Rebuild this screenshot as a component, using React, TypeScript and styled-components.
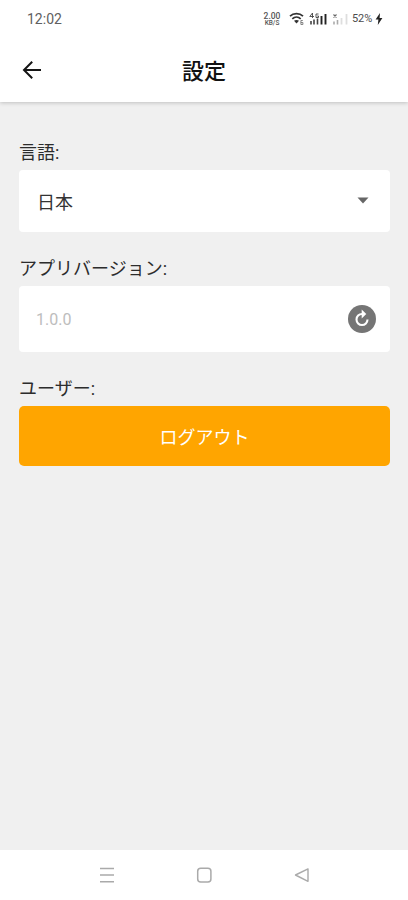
import React from 'react';
import styled, { createGlobalStyle } from 'styled-components';

const GlobalStyle = createGlobalStyle`
  * { box-sizing: border-box; }
  body { margin: 0; background: #f0f0f0; font-family: Roboto, "Noto Sans CJK JP", sans-serif; }
  svg { display: block; }
`;

const Screen = styled.div`
  display: flex;
  flex-direction: column;
  width: 408px;
  height: 900px;
  overflow: hidden;
  background: #f0f0f0;
`;

const Header = styled.header`
  flex: none;
  height: 102px;
  background: #fff;
  box-shadow: 0 1px 4px rgba(0, 0, 0, 0.2);
`;

const StatusBar = styled.div`
  display: flex;
  justify-content: space-between;
  align-items: center;
  height: 38px;
  padding: 0 25px 0 27px;
`;

const Clock = styled.span`
  font-size: 14px;
  line-height: 16px;
  color: #606060;
`;

const StatusIcons = styled.div`
  display: flex;
  align-items: center;
  height: 16px;
`;

const Spacer = styled.span<{ $width: number }>`
  flex: none;
  width: ${(p) => p.$width}px;
`;

const NetSpeed = styled.div`
  display: flex;
  flex-direction: column;
  align-items: center;
  width: 20px;
  margin-right: 7px;
  color: #555;
  font-size: 8.5px;
  line-height: 8px;
  font-weight: 500;
`;

const SpeedValue = styled.span`
  height: 8px;
  line-height: 8px;
`;

const SpeedUnit = styled.span`
  height: 7px;
  font-size: 6.5px;
  line-height: 7px;
`;

const Battery = styled.span`
  width: 22px;
  margin-left: 3px;
  font-size: 11px;
  line-height: 14px;
  letter-spacing: -0.1px;
  color: #4c4c4c;
`;

const TitleBar = styled.div`
  display: grid;
  grid-template-columns: 64px 1fr 64px;
  align-items: center;
  height: 64px;
`;

const BackButton = styled.button`
  display: flex;
  width: 24px;
  height: 24px;
  margin-left: 20px;
  padding: 0;
  border: 0;
  background: none;
`;

const Title = styled.h1`
  margin: 0;
  padding-top: 3px;
  text-align: center;
  font-size: 22px;
  line-height: 32px;
  font-weight: 500;
  color: #111;
`;

const Content = styled.main`
  flex: 1;
  padding: 36px 18px 0 19px;
`;

const Section = styled.section<{ $gap: number }>`
  margin-bottom: ${(p) => p.$gap}px;
`;

const Label = styled.div`
  height: 32px;
  font-size: 18px;
  line-height: 30px;
  color: #2c2c2c;
`;

const Field = styled.div<{ $height: number; $muted?: boolean }>`
  display: flex;
  justify-content: space-between;
  align-items: center;
  height: ${(p) => p.$height}px;
  padding: ${(p) => (p.$muted ? '0 14px 0 17px' : '0 15px 0 18px')};
  border-radius: 4px;
  background: #fff;
  font-size: ${(p) => (p.$muted ? 16 : 18)}px;
  color: ${(p) => (p.$muted ? '#bdbdbd' : '#333')};
`;

const RefreshButton = styled.button`
  display: flex;
  width: 28px;
  height: 28px;
  padding: 0;
  border: 0;
  border-radius: 50%;
  background: #757575;
  align-items: center;
  justify-content: center;
`;

const LogoutButton = styled.button`
  display: block;
  width: 100%;
  height: 60px;
  padding: 0;
  border: 0;
  border-radius: 5px;
  background: #ffa500;
  color: #fff;
  font-family: inherit;
  font-size: 18px;
  font-weight: 400;
`;

const NavBar = styled.nav`
  display: flex;
  flex: none;
  justify-content: space-between;
  align-items: center;
  height: 50px;
  padding: 0 97px;
  background: #fff;
`;

const WifiIcon = () => (
  <svg width="16" height="14" viewBox="0 0 16 14" fill="none" stroke="#333" strokeWidth="1.7">
    <path d="M1 4.2C4.5.8 10.5.8 14 4.2M3.3 6.8c2.4-2.2 6-2.2 8.4 0" />
    <path d="M5 8.8c1.5-1.1 3.5-1.1 5 0L7.5 11.5z" fill="#333" stroke="none" />
    <path d="M13.8 8.5h-1.9v4h2v-2h-2" stroke="#777" strokeWidth=".9" />
  </svg>
);

const MobileSignalIcon = () => (
  <svg width="18" height="14" viewBox="0 0 18 14" fill="none" stroke="#444">
    <path d="M3.5 6V1L.8 4.5H5M9.5 2H7v3.5h2.5V4H8.2" strokeWidth=".9" />
    <path d="M2 12.5V9M5 12.5V7.5M8.5 12.5v-6" strokeWidth="1.6" />
    <path d="M12.5 12.5V4M16.5 12.5V2" stroke="#222" strokeWidth="1.9" />
  </svg>
);

const EmptySignalIcon = () => (
  <svg width="17" height="14" viewBox="0 0 17 14" fill="none">
    <path d="M1.5 2.5l3 3m0-3l-3 3" stroke="#666" strokeWidth="1.1" />
    <path d="M2 12.5V9.5M5.5 12.5V8" stroke="#aaa" strokeWidth="1.6" />
    <path d="M9.5 12.5V6M14.5 12.5V2" stroke="#dedede" strokeWidth="1.8" />
  </svg>
);

const BoltIcon = () => (
  <svg width="8" height="14" viewBox="0 0 8 14" fill="#222">
    <path d="M5 1L.6 7.6h2.8L2.8 13l4.6-7H4.6z" />
  </svg>
);

const BackIcon = () => (
  <svg width="24" height="24" viewBox="0 0 24 24" fill="none" stroke="#151515" strokeWidth="2">
    <path d="M21 12H4.5M12.2 3.7L4 12l8.2 8.3" />
  </svg>
);

const CaretIcon = () => (
  <svg width="24" height="24" viewBox="0 0 24 24" fill="#666">
    <path d="M6.5 8.5h11l-5.5 6z" />
  </svg>
);

const RefreshIcon = () => (
  <svg width="20" height="20" viewBox="0 0 20 20" fill="none" stroke="#fff" strokeWidth="2.1">
    <path d="M10.7 5H10a5.5 5.5 0 1 0 5.5 5.5" />
    <path d="M9.7.6L14.3 5l-4.6 4.4z" fill="#fff" stroke="none" />
  </svg>
);

const MenuIcon = () => (
  <svg width="20" height="20" viewBox="0 0 20 20" fill="none" stroke="#aaa" strokeWidth="1.5">
    <path d="M3 3.5h14M3 10h14M3 16.8h14" />
  </svg>
);

const HomeIcon = () => (
  <svg width="20" height="20" viewBox="0 0 20 20" fill="none" stroke="#aaa" strokeWidth="1.5">
    <rect x="3.7" y="3.3" width="13.2" height="13.8" rx="3" />
  </svg>
);

const NavBackIcon = () => (
  <svg width="20" height="20" viewBox="0 0 20 20" fill="none" stroke="#aaa" strokeWidth="1.4" strokeLinejoin="round">
    <path d="M4.5 10L17 3.9v12.4z" />
  </svg>
);

export default function App() {
  return (
    <>
      <GlobalStyle />
      <Screen lang="ja">
        <Header>
          <StatusBar>
            <Clock>12:02</Clock>
            <StatusIcons>
              <NetSpeed>
                <SpeedValue>2.00</SpeedValue>
                <SpeedUnit>KB/S</SpeedUnit>
              </NetSpeed>
              <WifiIcon />
              <Spacer $width={4} />
              <MobileSignalIcon />
              <Spacer $width={5} />
              <EmptySignalIcon />
              <Battery>52%</Battery>
              <Spacer $width={1} />
              <BoltIcon />
            </StatusIcons>
          </StatusBar>
          <TitleBar>
            <BackButton aria-label="戻る">
              <BackIcon />
            </BackButton>
            <Title>設定</Title>
          </TitleBar>
        </Header>
        <Content>
          <Section $gap={22}>
            <Label>言語:</Label>
            <Field $height={62}>
              日本
              <CaretIcon />
            </Field>
          </Section>
          <Section $gap={22}>
            <Label>アプリバージョン:</Label>
            <Field $height={66} $muted>
              1.0.0
              <RefreshButton aria-label="更新">
                <RefreshIcon />
              </RefreshButton>
            </Field>
          </Section>
          <Section $gap={0}>
            <Label>ユーザー:</Label>
            <LogoutButton>ログアウト</LogoutButton>
          </Section>
        </Content>
        <NavBar>
          <MenuIcon />
          <HomeIcon />
          <NavBackIcon />
        </NavBar>
      </Screen>
    </>
  );
}
